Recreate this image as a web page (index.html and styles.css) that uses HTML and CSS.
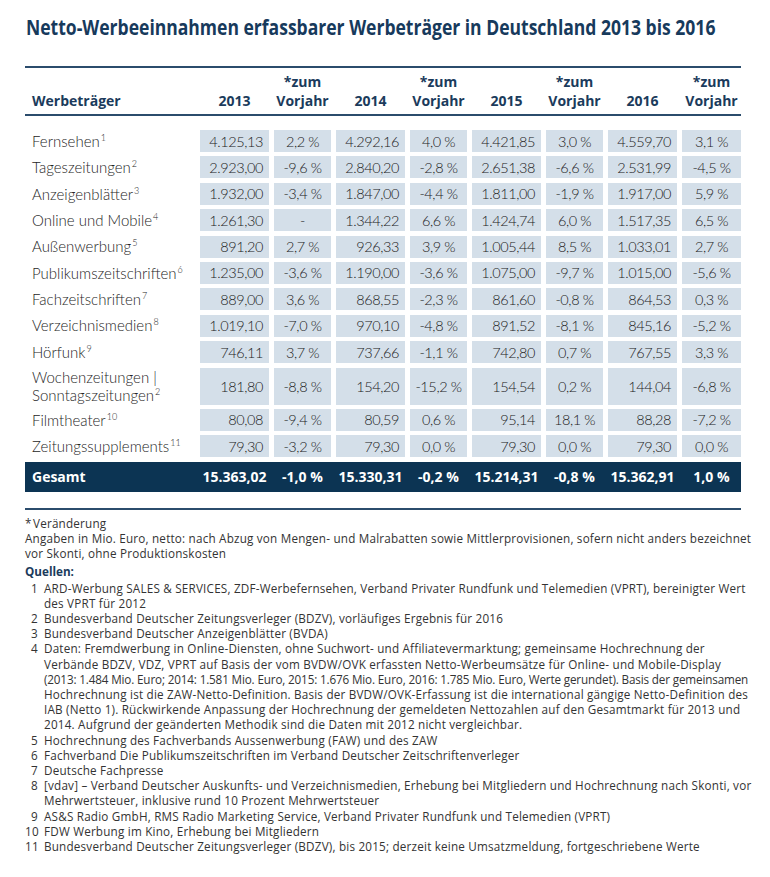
FILE: index.html
```html
<!DOCTYPE html>
<html lang="de">
<head>
<meta charset="utf-8">
<title>Netto-Werbeeinnahmen</title>
<link rel="stylesheet" href="styles.css">
</head>
<body>
<div class="page">
  <h1 class="title">Netto-Werbeeinnahmen erfassbarer Werbeträger in Deutschland 2013 bis 2016</h1>

  <div class="thead grid">
    <div class="h h-first">Werbeträger</div>
    <div class="h">2013</div>
    <div class="h">*zum<br>Vorjahr</div>
    <div class="h">2014</div>
    <div class="h">*zum<br>Vorjahr</div>
    <div class="h">2015</div>
    <div class="h">*zum<br>Vorjahr</div>
    <div class="h">2016</div>
    <div class="h">*zum<br>Vorjahr</div>
  </div>

  <div class="tbody grid">
    <div class="lbl">Fernsehen<sup>1</sup></div>
    <div class="c num">4.125,13</div><div class="c pct">2,2 %</div>
    <div class="c num">4.292,16</div><div class="c pct">4,0 %</div>
    <div class="c num">4.421,85</div><div class="c pct">3,0 %</div>
    <div class="c num">4.559,70</div><div class="c pct">3,1 %</div>

    <div class="lbl">Tageszeitungen<sup>2</sup></div>
    <div class="c num">2.923,00</div><div class="c pct">-9,6 %</div>
    <div class="c num">2.840,20</div><div class="c pct">-2,8 %</div>
    <div class="c num">2.651,38</div><div class="c pct">-6,6 %</div>
    <div class="c num">2.531,99</div><div class="c pct">-4,5 %</div>

    <div class="lbl">Anzeigenblätter<sup>3</sup></div>
    <div class="c num">1.932,00</div><div class="c pct">-3,4 %</div>
    <div class="c num">1.847,00</div><div class="c pct">-4,4 %</div>
    <div class="c num">1.811,00</div><div class="c pct">-1,9 %</div>
    <div class="c num">1.917,00</div><div class="c pct">5,9 %</div>

    <div class="lbl">Online und Mobile<sup>4</sup></div>
    <div class="c num">1.261,30</div><div class="c pct">-</div>
    <div class="c num">1.344,22</div><div class="c pct">6,6 %</div>
    <div class="c num">1.424,74</div><div class="c pct">6,0 %</div>
    <div class="c num">1.517,35</div><div class="c pct">6,5 %</div>

    <div class="lbl">Außenwerbung<sup>5</sup></div>
    <div class="c num">891,20</div><div class="c pct">2,7 %</div>
    <div class="c num">926,33</div><div class="c pct">3,9 %</div>
    <div class="c num">1.005,44</div><div class="c pct">8,5 %</div>
    <div class="c num">1.033,01</div><div class="c pct">2,7 %</div>

    <div class="lbl">Publikumszeitschriften<sup>6</sup></div>
    <div class="c num">1.235,00</div><div class="c pct">-3,6 %</div>
    <div class="c num">1.190,00</div><div class="c pct">-3,6 %</div>
    <div class="c num">1.075,00</div><div class="c pct">-9,7 %</div>
    <div class="c num">1.015,00</div><div class="c pct">-5,6 %</div>

    <div class="lbl">Fachzeitschriften<sup>7</sup></div>
    <div class="c num">889,00</div><div class="c pct">3,6 %</div>
    <div class="c num">868,55</div><div class="c pct">-2,3 %</div>
    <div class="c num">861,60</div><div class="c pct">-0,8 %</div>
    <div class="c num">864,53</div><div class="c pct">0,3 %</div>

    <div class="lbl">Verzeichnismedien<sup>8</sup></div>
    <div class="c num">1.019,10</div><div class="c pct">-7,0 %</div>
    <div class="c num">970,10</div><div class="c pct">-4,8 %</div>
    <div class="c num">891,52</div><div class="c pct">-8,1 %</div>
    <div class="c num">845,16</div><div class="c pct">-5,2 %</div>

    <div class="lbl">Hörfunk<sup>9</sup></div>
    <div class="c num">746,11</div><div class="c pct">3,7 %</div>
    <div class="c num">737,66</div><div class="c pct">-1,1 %</div>
    <div class="c num">742,80</div><div class="c pct">0,7 %</div>
    <div class="c num">767,55</div><div class="c pct">3,3 %</div>

    <div class="lbl">Wochenzeitungen |<br>Sonntagszeitungen<sup>2</sup></div>
    <div class="c num">181,80</div><div class="c pct">-8,8 %</div>
    <div class="c num">154,20</div><div class="c pct">-15,2 %</div>
    <div class="c num">154,54</div><div class="c pct">0,2 %</div>
    <div class="c num">144,04</div><div class="c pct">-6,8 %</div>

    <div class="lbl">Filmtheater<sup>10</sup></div>
    <div class="c num">80,08</div><div class="c pct">-9,4 %</div>
    <div class="c num">80,59</div><div class="c pct">0,6 %</div>
    <div class="c num">95,14</div><div class="c pct">18,1 %</div>
    <div class="c num">88,28</div><div class="c pct">-7,2 %</div>

    <div class="lbl">Zeitungssupplements<sup>11</sup></div>
    <div class="c num">79,30</div><div class="c pct">-3,2 %</div>
    <div class="c num">79,30</div><div class="c pct">0,0 %</div>
    <div class="c num">79,30</div><div class="c pct">0,0 %</div>
    <div class="c num">79,30</div><div class="c pct">0,0 %</div>
  </div>

  <div class="total grid">
    <div class="t t-first">Gesamt</div>
    <div class="t">15.363,02</div><div class="t">-1,0 %</div>
    <div class="t">15.330,31</div><div class="t">-0,2 %</div>
    <div class="t">15.214,31</div><div class="t">-0,8 %</div>
    <div class="t">15.362,91</div><div class="t">1,0 %</div>
  </div>

  <div class="notes">
    <p class="note">*&#8202;Veränderung</p>
    <p class="note">Angaben in Mio. Euro, netto: nach Abzug von Mengen- und Malrabatten sowie Mittlerprovisionen, sofern nicht anders bezeichnet<br>vor Skonti, ohne Produktionskosten</p>
    <p class="src-title">Quellen:</p>
    <ol class="sources">
      <li><span class="n">1</span><span class="s">ARD-Werbung SALES &amp; SERVICES, ZDF-Werbefernsehen, Verband Privater Rundfunk und Telemedien (VPRT), bereinigter Wert<br>des VPRT für 2012</span></li>
      <li><span class="n">2</span><span class="s">Bundesverband Deutscher Zeitungsverleger (BDZV), vorläufiges Ergebnis für 2016</span></li>
      <li><span class="n">3</span><span class="s">Bundesverband Deutscher Anzeigenblätter (BVDA)</span></li>
      <li><span class="n">4</span><span class="s">Daten: Fremdwerbung in Online-Diensten, ohne Suchwort- und Affiliatevermarktung; gemeinsame Hochrechnung der<br>Verbände BDZV, VDZ, VPRT auf Basis der vom BVDW/OVK erfassten Netto-Werbeumsätze für Online- und Mobile-Display<br><span class="tight">(2013: 1.484 Mio. Euro; 2014: 1.581 Mio. Euro, 2015: 1.676 Mio. Euro, 2016: 1.785 Mio. Euro, Werte gerundet). Basis der gemeinsamen</span><br>Hochrechnung ist die ZAW-Netto-Definition. Basis der BVDW/OVK-Erfassung ist die international gängige Netto-Definition des<br>IAB (Netto 1). Rückwirkende Anpassung der Hochrechnung der gemeldeten Nettozahlen auf den Gesamtmarkt für 2013 und<br>2014. Aufgrund der geänderten Methodik sind die Daten mit 2012 nicht vergleichbar.</span></li>
      <li><span class="n">5</span><span class="s">Hochrechnung des Fachverbands Aussenwerbung (FAW) und des ZAW</span></li>
      <li><span class="n">6</span><span class="s">Fachverband Die Publikumszeitschriften im Verband Deutscher Zeitschriftenverleger</span></li>
      <li><span class="n">7</span><span class="s">Deutsche Fachpresse</span></li>
      <li><span class="n">8</span><span class="s">[vdav] – Verband Deutscher Auskunfts- und Verzeichnismedien, Erhebung bei Mitgliedern und Hochrechnung nach Skonti, vor<br>Mehrwertsteuer, inklusive rund 10 Prozent Mehrwertsteuer</span></li>
      <li><span class="n">9</span><span class="s">AS&amp;S Radio GmbH, RMS Radio Marketing Service, Verband Privater Rundfunk und Telemedien (VPRT)</span></li>
      <li><span class="n">10</span><span class="s">FDW Werbung im Kino, Erhebung bei Mitgliedern</span></li>
      <li><span class="n">11</span><span class="s">Bundesverband Deutscher Zeitungsverleger (BDZV), bis 2015; derzeit keine Umsatzmeldung, fortgeschriebene Werte</span></li>
    </ol>
  </div>
</div>
</body>
</html>
```
FILE: styles.css
```css
html, body {
  margin: 0;
  padding: 0;
  background: #ffffff;
}

.page {
  width: 716px;
  padding: 13px 0 0 25px;
  font-family: "Open Sans", "Lato", sans-serif;
}

.title {
  margin: 0 0 25px 1px;
  font-family: "Open Sans", sans-serif;
  font-weight: 700;
  font-size: 20.5px;
  line-height: 28px;
  color: #173a5c;
  white-space: nowrap;
  transform: scaleX(0.855);
  transform-origin: left center;
}

.grid {
  display: grid;
  grid-template-columns: 170px 69px 57px 69px 57px 69px 57px 69px 59px;
  column-gap: 5px;
}

.thead {
  border-top: 2px solid #2b4c6c;
  border-bottom: 2px solid #2b4c6c;
  padding: 4px 0 4px;
  align-items: end;
}

.h {
  font-family: "Open Sans", sans-serif;
  font-weight: 700;
  font-size: 14px;
  line-height: 19px;
  color: #1b3b5c;
  text-align: center;
  white-space: nowrap;
}

.h-first {
  text-align: left;
  padding-left: 7px;
}

.tbody {
  margin-top: 14px;
  row-gap: 4.4px;
}

.lbl {
  padding-left: 7px;
  font-family: "Lato", sans-serif;
  font-size: 15px;
  font-weight: 300;
  line-height: 18.5px;
  color: #262626;
  align-self: center;
  white-space: nowrap;
}

.lbl sup {
  font-size: 9px;
  line-height: 0;
  vertical-align: 6px;
  margin-left: 1px;
}

.c {
  background: #d4dfe9;
  min-height: 22px;
  display: flex;
  align-items: center;
  font-family: "Lato", sans-serif;
  font-size: 14.5px;
  font-weight: 300;
  letter-spacing: -0.4px;
  color: #222222;
  white-space: nowrap;
}

.num {
  justify-content: flex-end;
  padding-right: 6px;
}

.pct {
  justify-content: center;
}

.total {
  margin-top: 4.4px;
  height: 30px;
  background: #0c3453;
  align-items: center;
}

.t {
  font-family: "Open Sans", sans-serif;
  font-weight: 700;
  font-size: 14px;
  line-height: 20px;
  color: #ffffff;
  text-align: center;
  white-space: nowrap;
}

.t-first {
  text-align: left;
  padding-left: 7px;
}

.notes {
  margin-top: 16px;
  border-top: 2px solid #2b4c6c;
  padding-top: 6px;
  font-family: "Open Sans", sans-serif;
  font-size: 11.7px;
  letter-spacing: 0.2px;
  line-height: 15.2px;
  color: #333333;
}

.note {
  margin: 0;
  white-space: nowrap;
}

.src-title {
  margin: 3px 0 1px;
  font-weight: 700;
  letter-spacing: 0;
  color: #1b3b5c;
}

.sources {
  list-style: none;
  margin: 0;
  padding: 0;
}

.sources li {
  display: flex;
  gap: 6px;
}

.sources .n {
  width: 13px;
  flex: none;
  text-align: right;
}

.sources .s {
  white-space: nowrap;
}

.tight {
  letter-spacing: -0.15px;
}
```
